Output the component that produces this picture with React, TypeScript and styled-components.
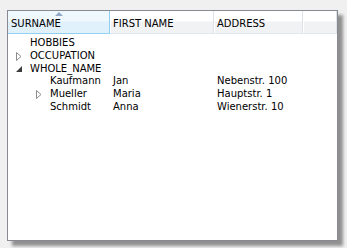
import React from "react";
import styled, { createGlobalStyle } from "styled-components";

const COLUMNS = "102px 104px 89px 1fr";

const GlobalStyle = createGlobalStyle`
  html, body {
    margin: 0;
    padding: 0;
    background: #f0f0f0;
  }
  body {
    font-family: "DejaVu Sans", "Liberation Sans", sans-serif;
    font-size: 10px;
    color: #000000;
  }
`;

const Page = styled.div`
  width: 347px;
  height: 248px;
  padding: 10px 0 0 7px;
  box-sizing: border-box;
`;

const Panel = styled.div`
  width: 331px;
  height: 231px;
  box-sizing: border-box;
  border: 1px solid #878a93;
  background: #ffffff;
  box-shadow: 5px 5px 3px rgba(0, 0, 0, 0.4);
`;

const HeaderRow = styled.div`
  display: grid;
  grid-template-columns: ${COLUMNS};
  height: 22px;
  border-bottom: 1px solid #e3e6ea;
  background: linear-gradient(to bottom, #ffffff 0%, #ffffff 45%, #f1f2f4 50%, #f1f2f4 100%);
`;

const HeaderCell = styled.div<{ $active?: boolean }>`
  position: relative;
  display: flex;
  align-items: center;
  padding: 2px 0 0 3px;
  box-sizing: border-box;
  border-right: 1px solid ${(p) => (p.$active ? "#8fd0f3" : "#dfe2e6")};
  box-shadow: ${(p) => (p.$active ? "none" : "inset 1px 0 0 #ffffff")};
  background: ${(p) =>
    p.$active
      ? "linear-gradient(to bottom, #eef8fd 0%, #eef8fd 45%, #e0f1fb 50%, #e0f1fb 100%)"
      : "transparent"};
  ${(p) => (p.$active ? "margin-bottom: -1px; border-bottom: 1px solid #8fd0f3;" : "")}
  white-space: nowrap;
  overflow: hidden;
`;

const SortArrow = styled.span`
  position: absolute;
  top: 1px;
  left: 50%;
  margin-left: -4px;
  width: 0;
  height: 0;
  border-left: 4px solid transparent;
  border-right: 4px solid transparent;
  border-bottom: 4px solid #8fa9c8;
`;

const Body = styled.div`
  padding-top: 3px;
`;

const Row = styled.div`
  display: grid;
  grid-template-columns: ${COLUMNS};
  height: 12.8px;
  line-height: 12.8px;
  white-space: nowrap;
`;

const TreeCell = styled.div<{ $level: number }>`
  display: flex;
  align-items: center;
  padding-left: ${(p) => 8 + p.$level * 20}px;
`;

const Expander = styled.span`
  display: inline-flex;
  width: 14px;
  height: 12px;
  align-items: center;
  justify-content: flex-start;
`;

const Cell = styled.div`
  padding-left: 3px;
`;

type TreeRow = {
  label: string;
  level: number;
  state?: "collapsed" | "expanded";
  first?: string;
  address?: string;
};

const rows: TreeRow[] = [
  { label: "HOBBIES", level: 0 },
  { label: "OCCUPATION", level: 0, state: "collapsed" },
  { label: "WHOLE_NAME", level: 0, state: "expanded" },
  { label: "Kaufmann", level: 1, first: "Jan", address: "Nebenstr. 100" },
  { label: "Mueller", level: 1, state: "collapsed", first: "Maria", address: "Hauptstr. 1" },
  { label: "Schmidt", level: 1, first: "Anna", address: "Wienerstr. 10" },
];

const Glyph = ({ state }: { state?: "collapsed" | "expanded" }) => {
  if (state === "collapsed") {
    return (
      <svg width="6" height="9" viewBox="0 0 6 9">
        <path d="M0.5 0.5 L5 4.5 L0.5 8.5 Z" fill="#ffffff" stroke="#8c8c8c" strokeWidth="1" />
      </svg>
    );
  }
  if (state === "expanded") {
    return (
      <svg width="6" height="6" viewBox="0 0 6 6">
        <path d="M6 0 L6 6 L0 6 Z" fill="#3c3c3c" />
      </svg>
    );
  }
  return null;
};

export default function App() {
  return (
    <>
      <GlobalStyle />
      <Page>
        <Panel>
          <HeaderRow>
            <HeaderCell $active>
              <SortArrow />
              SURNAME
            </HeaderCell>
            <HeaderCell>FIRST NAME</HeaderCell>
            <HeaderCell>ADDRESS</HeaderCell>
            <HeaderCell />
          </HeaderRow>
          <Body>
            {rows.map((row) => (
              <Row key={row.label}>
                <TreeCell $level={row.level}>
                  <Expander>
                    <Glyph state={row.state} />
                  </Expander>
                  {row.label}
                </TreeCell>
                <Cell>{row.first}</Cell>
                <Cell>{row.address}</Cell>
                <Cell />
              </Row>
            ))}
          </Body>
        </Panel>
      </Page>
    </>
  );
}
